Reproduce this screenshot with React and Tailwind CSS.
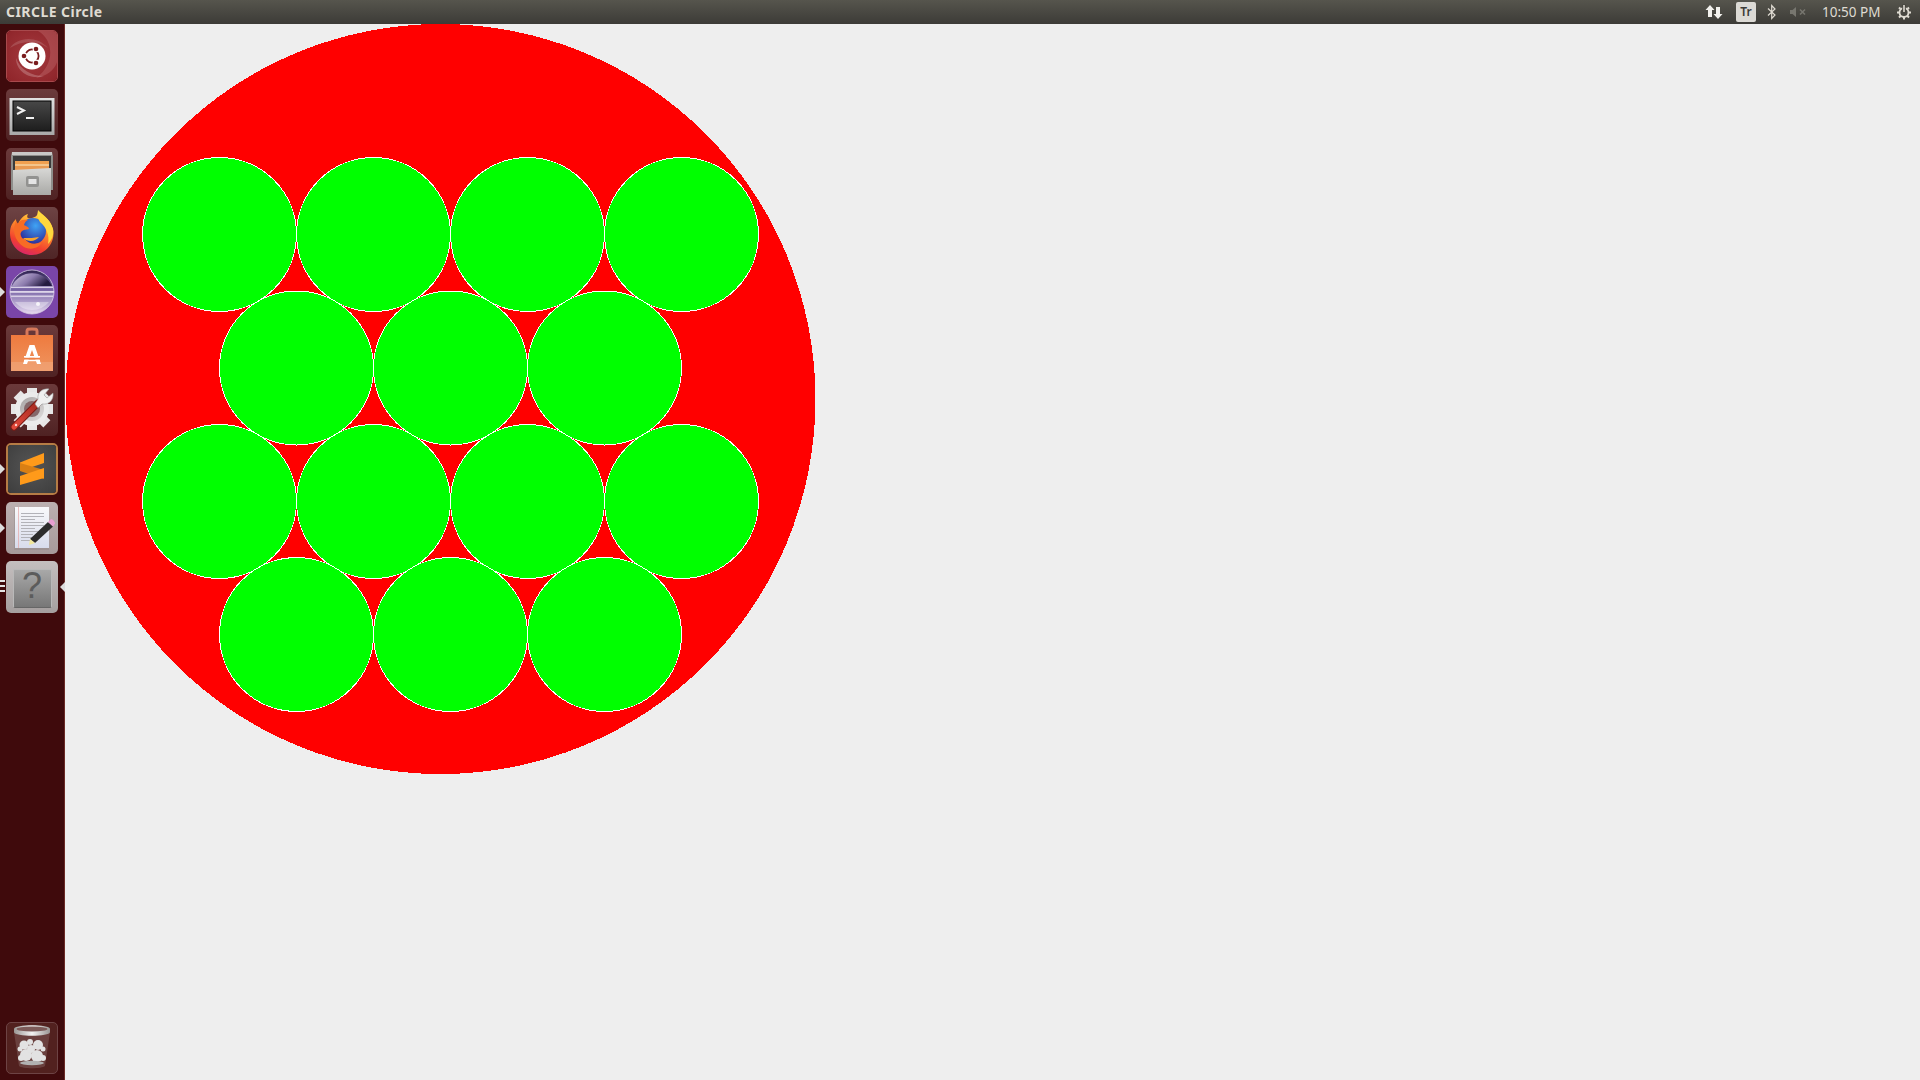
const CIRCLES = [
  [219.5, 234.5], [373.5, 234.5], [527.5, 234.5], [681.5, 234.5],
  [296.5, 368], [450.5, 368], [604.5, 368],
  [219.5, 501.5], [373.5, 501.5], [527.5, 501.5], [681.5, 501.5],
  [296.5, 634.5], [450.5, 634.5], [604.5, 634.5],
];

function Tile({ className, children, leftPip, rightPip, triple }) {
  return (
    <div className="relative h-[52px] w-full">
      {leftPip && (
        <svg className="absolute left-[-6px] top-[19px]" width="6" height="14" viewBox="0 0 6 14">
          <path d="M0 2 L5 7 L0 12 Z" fill="#dcdcdc" />
        </svg>
      )}
      {triple && (
        <svg className="absolute left-[-6px] top-[18px]" width="6" height="14" viewBox="0 0 6 14">
          <path d="M0 1h5v2H0zM0 6h5v2H0zM0 11h5v2H0z" fill="#e4e4e4" />
        </svg>
      )}
      {rightPip && (
        <svg className="absolute right-[-7px] top-[19px]" width="6" height="14" viewBox="0 0 6 14">
          <path d="M6 2 L1 7 L6 12 Z" fill="#dcdcdc" />
        </svg>
      )}
      <div className={`h-[52px] w-[52px] overflow-hidden rounded-[5px] ${className}`}>{children}</div>
    </div>
  );
}

const Art = ({ children }) => (
  <svg width="52" height="52" viewBox="0 0 52 52" className="block">
    {children}
  </svg>
);

function UbuntuIcon() {
  return (
    <Art>
      <defs>
        <radialGradient id="ub" cx="0.5" cy="0.5" r="0.75">
          <stop offset="0" stopColor="#a53a3f" />
          <stop offset="1" stopColor="#8c2227" />
        </radialGradient>
      </defs>
      <rect width="52" height="52" fill="url(#ub)" />
      <path d="M30 0 C48 8 50 34 30 48 C42 46 52 38 52 26 L52 0 Z" fill="#c46e70" opacity="0.4" />
      <path d="M4 18 C10 8 30 4 42 18 C32 10 16 10 4 18 Z" fill="#ffffff" opacity="0.14" />
      <path d="M10 28 C10 42 24 50 38 46 C26 46 14 40 10 28 Z" fill="#ffffff" opacity="0.22" />
      <circle cx="26" cy="26" r="13.5" fill="#ffffff" />
      <circle cx="26" cy="26" r="6.6" fill="none" stroke="#7a1c1e" strokeWidth="1.8" />
      <circle cx="18" cy="26" r="3.4" fill="#ffffff" />
      <circle cx="30" cy="19" r="3.4" fill="#ffffff" />
      <circle cx="30" cy="33" r="3.4" fill="#ffffff" />
      <circle cx="18" cy="26" r="2.3" fill="#7a1c1e" />
      <circle cx="30" cy="19" r="2.3" fill="#7a1c1e" />
      <circle cx="30" cy="33" r="2.3" fill="#7a1c1e" />
    </Art>
  );
}

function TerminalIcon() {
  return (
    <Art>
      <defs>
        <linearGradient id="termFrame" x1="0" y1="0" x2="0" y2="1">
          <stop offset="0" stopColor="#e0e0e0" />
          <stop offset="1" stopColor="#a8a8a8" />
        </linearGradient>
        <linearGradient id="termIn" x1="0" y1="0" x2="0" y2="1">
          <stop offset="0" stopColor="#474747" />
          <stop offset="1" stopColor="#1e1e1e" />
        </linearGradient>
      </defs>
      <rect x="3.5" y="9" width="45" height="37" fill="url(#termFrame)" />
      <rect x="6.5" y="11.5" width="39" height="31" fill="#000000" />
      <rect x="7.5" y="12.5" width="37" height="29" fill="url(#termIn)" />
      <path d="M11 18 L18 21.5 L11 25" fill="none" stroke="#f0f0f0" strokeWidth="2" />
      <rect x="20" y="28" width="8" height="2" fill="#f0f0f0" />
    </Art>
  );
}

function FilesIcon() {
  return (
    <Art>
      <defs>
        <linearGradient id="cab" x1="0" y1="0" x2="0" y2="1">
          <stop offset="0" stopColor="#d8d8d6" />
          <stop offset="1" stopColor="#a9a9a6" />
        </linearGradient>
      </defs>
      <path d="M6 4 H46 L47 8 V42 H5 V8 Z" fill="#8e8e8b" />
      <rect x="6" y="4" width="40" height="3" fill="#c9c9c7" />
      <rect x="7" y="8" width="38" height="16" fill="#3b3b3a" />
      <rect x="9" y="13" width="34" height="3" fill="#f0a050" />
      <rect x="9" y="16" width="34" height="2" fill="#f4c58b" />
      <rect x="9" y="18" width="34" height="4" fill="#e89a52" />
      <path d="M7 22 L45 20 L45 47 H7 Z" fill="url(#cab)" />
      <rect x="20" y="28" width="13" height="11" rx="2" fill="#929290" />
      <rect x="22.5" y="31" width="8" height="5" fill="#e4e4e4" />
    </Art>
  );
}

function FirefoxIcon() {
  return (
    <Art>
      <defs>
        <linearGradient id="ffBody" x1="0.7" y1="0" x2="0.3" y2="1">
          <stop offset="0" stopColor="#ffe14d" />
          <stop offset="0.35" stopColor="#ff9a2b" />
          <stop offset="0.75" stopColor="#f2402f" />
          <stop offset="1" stopColor="#d6246d" />
        </linearGradient>
        <radialGradient id="ffGlobe" cx="0.6" cy="0.3" r="0.8">
          <stop offset="0" stopColor="#3fa4f5" />
          <stop offset="1" stopColor="#2a1f8f" />
        </radialGradient>
      </defs>
      <path d="M32 4 C35 8 44 11 47 22 C50 36 39 48 26 48 C13 48 4 38 4 26 C4 19 7 15 10 12 C10 15 11 16 12 17 C14 12 18 8 22 7 C20 11 22 12 26 11 C30 10 32 8 32 4 Z" fill="url(#ffBody)" />
      <circle cx="27" cy="24" r="13" fill="url(#ffGlobe)" />
      <path d="M32 3 C36 8 44 11 47 22 C48 28 46 33 42 37 C44 28 40 20 34 15 C32 12 31 8 32 3 Z" fill="#ffd83d" />
      <path d="M10 14 C6 22 8 34 18 40 C26 44 34 40 36 35 C30 38 22 37 19 32 C14 32 13 27 16 24 C19 22 20 23 23 22 C23 20 20 19 18 18 C19 15 20 14 22 13 C17 12 13 13 12 17 Z" fill="#f76c25" />
      <path d="M17 31 C23 36 30 34 33 30 C28 31 24 31 17 31 Z" fill="#f9a52b" />
    </Art>
  );
}

function EclipseIcon() {
  return (
    <Art>
      <defs>
        <linearGradient id="ecl" x1="0" y1="0" x2="0" y2="1">
          <stop offset="0" stopColor="#2f2450" />
          <stop offset="0.4" stopColor="#6f5a9f" />
          <stop offset="1" stopColor="#e5d9f0" />
        </linearGradient>
        <linearGradient id="eclTop" x1="0" y1="0" x2="1" y2="0.4">
          <stop offset="0" stopColor="#d8cfe6" />
          <stop offset="0.55" stopColor="#8d7cae" />
          <stop offset="1" stopColor="#241b40" />
        </linearGradient>
      </defs>
      <rect width="52" height="52" fill="#7a45a8" />
      <circle cx="26" cy="26" r="22" fill="url(#ecl)" stroke="#d8cfe6" strokeWidth="0.8" />
      <path d="M6 20 A22 22 0 0 1 46 20 Z" fill="url(#eclTop)" />
      <rect x="5" y="20.5" width="42" height="1.6" fill="#d8cfe6" />
      <rect x="4" y="25" width="44" height="1.8" fill="#ddd5e9" />
      <rect x="5" y="29.5" width="42" height="1.6" fill="#d8cfe6" />
      <path d="M9 36 A22 22 0 0 0 43 36 Z" fill="#ffffff" opacity="0.35" />
      <circle cx="32" cy="38" r="2" fill="#ffffff" opacity="0.8" />
    </Art>
  );
}

function SoftwareIcon() {
  return (
    <Art>
      <defs>
        <linearGradient id="bag" x1="0" y1="0" x2="0" y2="1">
          <stop offset="0" stopColor="#ee7a3e" />
          <stop offset="1" stopColor="#ef9560" />
        </linearGradient>
      </defs>
      <path d="M21 11 V6 C21 4 22 4 26 4 C30 4 31 4 31 6 V11" fill="none" stroke="#d6785a" strokeWidth="3" />
      <path d="M5 10 H47 V46 H5 Z" fill="url(#bag)" />
      <path d="M5 37 H47 V46 H5 Z" fill="#f0a77c" opacity="0.6" />
      <path d="M23.5 20 H28.5 L35 39 H31 L26 25 L21 39 H17 Z" fill="#ffffff" />
      <rect x="18" y="31" width="16" height="1.8" fill="#ffffff" />
      <rect x="18" y="34.5" width="16" height="1.8" fill="#ffffff" />
      <rect x="18" y="32.8" width="16" height="1.7" fill="#ee7f45" />
    </Art>
  );
}

function SettingsIcon() {
  const teeth = [0, 45, 90, 135, 180, 225, 270, 315];
  return (
    <Art>
      <defs>
        <linearGradient id="wr" x1="0" y1="1" x2="1" y2="0">
          <stop offset="0" stopColor="#e0483a" />
          <stop offset="1" stopColor="#a72a20" />
        </linearGradient>
        <linearGradient id="hole" x1="0" y1="0" x2="1" y2="1">
          <stop offset="0" stopColor="#a8a4a4" />
          <stop offset="1" stopColor="#dedcdc" />
        </linearGradient>
      </defs>
      <g>
        {teeth.map((a) => (
          <rect key={a} x="21" y="4" width="10" height="8" fill="#e6e6e6" transform={`rotate(${a} 26 25)`} />
        ))}
        <circle cx="26" cy="25" r="17" fill="#ebebeb" />
        <circle cx="26" cy="25" r="12" fill="url(#hole)" />
        <circle cx="26" cy="25" r="8" fill="#85686a" />
      </g>
      <path d="M8 43 L32 19" stroke="#7d1a14" strokeWidth="7" strokeLinecap="round" />
      <path d="M8 43 L32 19" stroke="url(#wr)" strokeWidth="5" strokeLinecap="round" />
      <circle cx="10" cy="41" r="1.2" fill="#ffd0c8" />
      <path d="M29 20 L32 15 C31 9 36 4 43 5 L38 11 L41 14 L47 9 C48 16 43 21 36 20 L32 24 Z" fill="#f0f0f0" stroke="#9b9b9b" strokeWidth="0.6" />
    </Art>
  );
}

function SublimeIcon() {
  return (
    <Art>
      <defs>
        <radialGradient id="subBg" cx="0.5" cy="0.45" r="0.7">
          <stop offset="0" stopColor="#555555" />
          <stop offset="1" stopColor="#3d3d3d" />
        </radialGradient>
      </defs>
      <rect width="52" height="52" fill="url(#subBg)" />
      <path d="M14 19.5 L38 10 V20 L14 28 Z" fill="#ff9a1a" />
      <path d="M14 28 L38 36 V27 L14 20 Z" fill="#d97f14" />
      <path d="M14 33 L38 25 V35 L14 42 Z" fill="#ff9a1a" />
    </Art>
  );
}

function EditorIcon() {
  const lines = [11, 14, 17, 20, 23, 26, 29, 32, 35, 38];
  return (
    <Art>
      <defs>
        <linearGradient id="paper" x1="0" y1="0" x2="0" y2="1">
          <stop offset="0" stopColor="#f8f8fa" />
          <stop offset="1" stopColor="#d8dcec" />
        </linearGradient>
      </defs>
      <rect x="8" y="6" width="35" height="42" fill="#8f8585" opacity="0.4" />
      <rect x="9" y="5" width="34" height="41" fill="url(#paper)" />
      <rect x="12" y="5" width="0.7" height="41" fill="#e6a6a6" />
      {lines.map((y, i) => (
        <rect key={y} x="15" y={y} width={i % 3 === 2 ? 14 : i > 6 ? 12 : 23} height="1" fill="#b2b2b8" />
      ))}
      <path d="M42 20 L47 24.5 L29 41 L24 37 Z" fill="#2c2c2c" />
      <path d="M42 20 L45 17 C46 16.5 49.5 20 49 21.5 L47 24.5 Z" fill="#e79fd0" />
      <path d="M24 37 L29 41 L23 43 Z" fill="#f1e79a" />
    </Art>
  );
}

function HelpIcon() {
  return (
    <div className="flex h-full w-full items-center justify-center pt-[3px]">
      <div className="flex h-[39px] w-[39px] items-start justify-center rounded-[2px] border border-[#b9b9b9] border-b-[#666666] bg-[linear-gradient(180deg,#a8a8a8,#777777)] font-['Liberation_Sans',sans-serif] text-[36px] leading-[32px] text-[#5c5c5c]">
        ?
      </div>
    </div>
  );
}

function TrashIcon() {
  return (
    <Art>
      <defs>
        <linearGradient id="rim" x1="0" y1="0" x2="1" y2="0">
          <stop offset="0" stopColor="#9a9694" />
          <stop offset="0.5" stopColor="#f3f3f3" />
          <stop offset="1" stopColor="#9a9694" />
        </linearGradient>
      </defs>
      <path d="M8 10 L13 44 C16 47 36 47 39 44 L44 10 Z" fill="#ffffff" opacity="0.14" />
      <path d="M8 7 C8 2 44 2 44 7 V10 C44 15 8 15 8 10 Z" fill="url(#rim)" />
      <ellipse cx="26" cy="7" rx="15.5" ry="2.6" fill="#7c5a58" />
      <g fill="#e2e2e2">
        <circle cx="18" cy="23" r="4.5" />
        <circle cx="24" cy="20" r="3" />
        <circle cx="32" cy="23" r="5" />
        <circle cx="14" cy="27" r="2.5" />
        <circle cx="37" cy="27" r="2.5" />
        <circle cx="20" cy="33" r="6" />
        <circle cx="31" cy="34" r="6" />
        <circle cx="25" cy="27" r="4" />
        <circle cx="15" cy="36" r="3" />
        <circle cx="37" cy="36" r="3" />
      </g>
      <ellipse cx="26" cy="41" rx="12" ry="2.2" fill="#b2b2b2" />
    </Art>
  );
}

function TopBar() {
  return (
    <header className="flex h-6 shrink-0 items-center justify-between bg-[linear-gradient(180deg,#56554d,#3c3b37)] pl-[6px] pr-[8px] font-['Noto_Sans',sans-serif] text-[#dfdbd2]">
      <span className="text-[14px] font-bold leading-none tracking-[0.45px]">CIRCLE Circle</span>
      <div className="flex items-center">
        <svg width="18" height="16" viewBox="0 0 18 16" className="mr-[13px]">
          <path d="M5 1 L9.5 6 H7 V13 H3 V6 H0.5 Z" fill="#f2f1ed" />
          <path d="M13 15 L8.5 10 H11 V3 H15 V10 H17.5 Z" fill="#f2f1ed" />
        </svg>
        <div className="mr-[11px] flex h-5 w-5 items-center justify-center rounded-[2px] bg-[#dcdad5] text-[12px] font-semibold leading-none text-[#3c3b37]">
          Tr
        </div>
        <svg width="10" height="16" viewBox="0 0 10 16" className="mr-[12px]">
          <path d="M1 4.5 L8 11 L4.7 14.5 V1.5 L8 5 L1 11.5" fill="none" stroke="#dfdbd2" strokeWidth="1.2" />
        </svg>
        <svg width="18" height="12" viewBox="0 0 18 12" className="mr-[15px]">
          <path d="M1 4 H3.5 L7 1 V11 L3.5 8 H1 Z" fill="#77766f" />
          <path d="M11 3.5 L16 8.5 M16 3.5 L11 8.5" stroke="#77766f" strokeWidth="1.5" />
        </svg>
        <span className="mr-[14px] w-[60px] whitespace-nowrap pt-[2px] text-[13.5px] leading-none text-[#dfdbd2]">10:50 PM</span>
        <svg width="16" height="16" viewBox="0 0 16 16">
          <circle cx="8" cy="8.5" r="4.5" fill="none" stroke="#dfdbd2" strokeWidth="1.8" />
          <path d="M8 0.5 V8" stroke="#45443e" strokeWidth="3.6" />
          <path d="M8 1 V8" stroke="#dfdbd2" strokeWidth="1.6" />
          <path d="M1 8.5 H3.5 M12.5 8.5 H15 M3 3.5 L4.5 5 M13 3.5 L11.5 5 M3 13.5 L4.8 11.7 M13 13.5 L11.2 11.7 M8 13 V15.5" stroke="#dfdbd2" strokeWidth="2" />
        </svg>
      </div>
    </header>
  );
}

function Launcher() {
  return (
    <aside className="flex w-[65px] shrink-0 flex-col justify-between border-r border-r-[#6b2a26] bg-[#3f0a0c] p-[6px]">
      <div className="flex flex-col gap-[7px]">
        <Tile className="border border-[#a8494c]"><div className="-m-px"><UbuntuIcon /></div></Tile>
        <Tile className="bg-[linear-gradient(180deg,#6b3a3b,#4f2223)]"><TerminalIcon /></Tile>
        <Tile className="bg-[linear-gradient(180deg,#6b3a3b,#4f2223)]"><FilesIcon /></Tile>
        <Tile className="bg-[linear-gradient(180deg,#6e4344,#4f2526)]"><FirefoxIcon /></Tile>
        <Tile leftPip><EclipseIcon /></Tile>
        <Tile className="bg-[linear-gradient(180deg,#6b3a3b,#4f2223)]"><SoftwareIcon /></Tile>
        <Tile className="bg-[linear-gradient(180deg,#6b3a3b,#4f2223)]"><SettingsIcon /></Tile>
        <Tile leftPip className="border-2 border-[#b67c45]"><div className="-m-[2px]"><SublimeIcon /></div></Tile>
        <Tile leftPip className="bg-[linear-gradient(180deg,#bcb0b0,#a69a9a)]"><EditorIcon /></Tile>
        <Tile triple rightPip className="bg-[linear-gradient(180deg,#c4bfbf,#a59f9f)]"><HelpIcon /></Tile>
      </div>
      <Tile className="border border-[#6d4344] bg-[#52211f]"><div className="-m-px"><TrashIcon /></div></Tile>
    </aside>
  );
}

function Canvas() {
  return (
    <main className="min-w-0 flex-1 bg-[#eeeeee]">
      <svg width="900" height="760" viewBox="65 24 900 760" shapeRendering="crispEdges" className="block">
        <circle cx="440.5" cy="399" r="375" fill="#ff0000" />
        {CIRCLES.map(([cx, cy]) => (
          <circle key={`${cx}-${cy}`} cx={cx} cy={cy} r="77" fill="#00ff00" stroke="#ffffff" strokeWidth="1" />
        ))}
      </svg>
    </main>
  );
}

export default function App() {
  return (
    <div className="flex h-[1080px] w-[1920px] flex-col overflow-hidden">
      <TopBar />
      <div className="flex min-h-0 flex-1">
        <Launcher />
        <Canvas />
      </div>
    </div>
  );
}
